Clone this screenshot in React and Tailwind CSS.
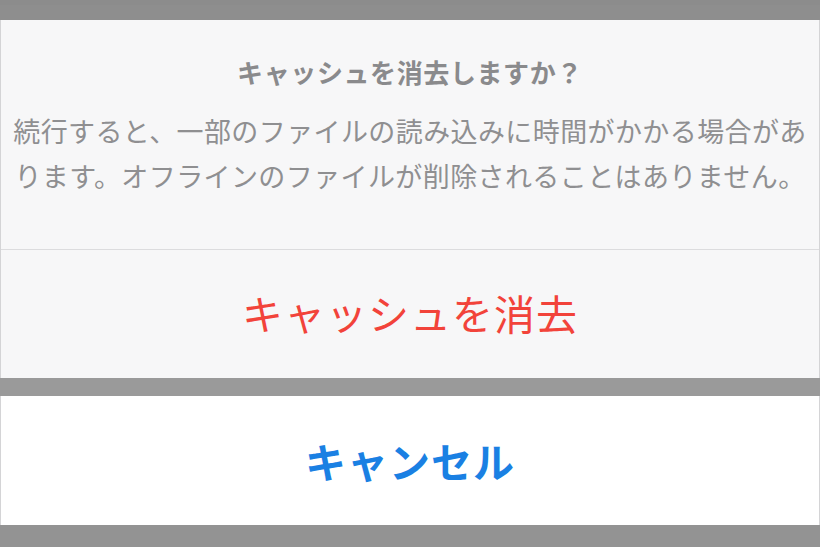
export default function App() {
  const font = { fontFamily: '"Noto Sans CJK JP", "Noto Sans", sans-serif' };
  return (
    <div className="flex h-[547px] w-[820px] flex-col overflow-hidden bg-[#939393]" style={font}>
      {/* dimmed backdrop above sheet */}
      <div className="h-[20px] shrink-0 border-t-[5px] border-[#8c8c8c] bg-[#8e8e8e]" />

      {/* alert sheet */}
      <div className="flex h-[358px] shrink-0 flex-col border-x border-[#d4d4d6] bg-[#f7f7f8]">
        <div className="flex h-[229px] shrink-0 flex-col items-center pt-[35px]">
          <h1 className="text-[26px] leading-[34px] font-bold tracking-[0.6px] text-[#8a8a8c]">
            キャッシュを消去しますか？
          </h1>
          <p className="mt-[19px] text-center text-[27px] leading-[45px] tracking-[0.4px] text-[#8f8f91]">
            続行すると、一部のファイルの読み込みに時間がかかる場合があ
            <br />
            ります。オフラインのファイルが削除されることはありません。
          </p>
        </div>
        <div className="h-px shrink-0 bg-[#dcdcde]" />
        <button className="flex flex-1 items-center justify-center pb-[2px] text-[41px] tracking-[1px] text-[#f2433a]">
          キャッシュを消去
        </button>
      </div>

      <div className="h-[18px] shrink-0 bg-[#9a9a9a]" />

      {/* cancel */}
      <div className="flex h-[129px] shrink-0 items-center justify-center border-x border-[#d4d4d6] bg-white">
        <button className="text-[41px] font-bold tracking-[1px] text-[#1a80e3]">キャンセル</button>
      </div>

      <div className="flex-1 bg-[#939393]" />
    </div>
  );
}
